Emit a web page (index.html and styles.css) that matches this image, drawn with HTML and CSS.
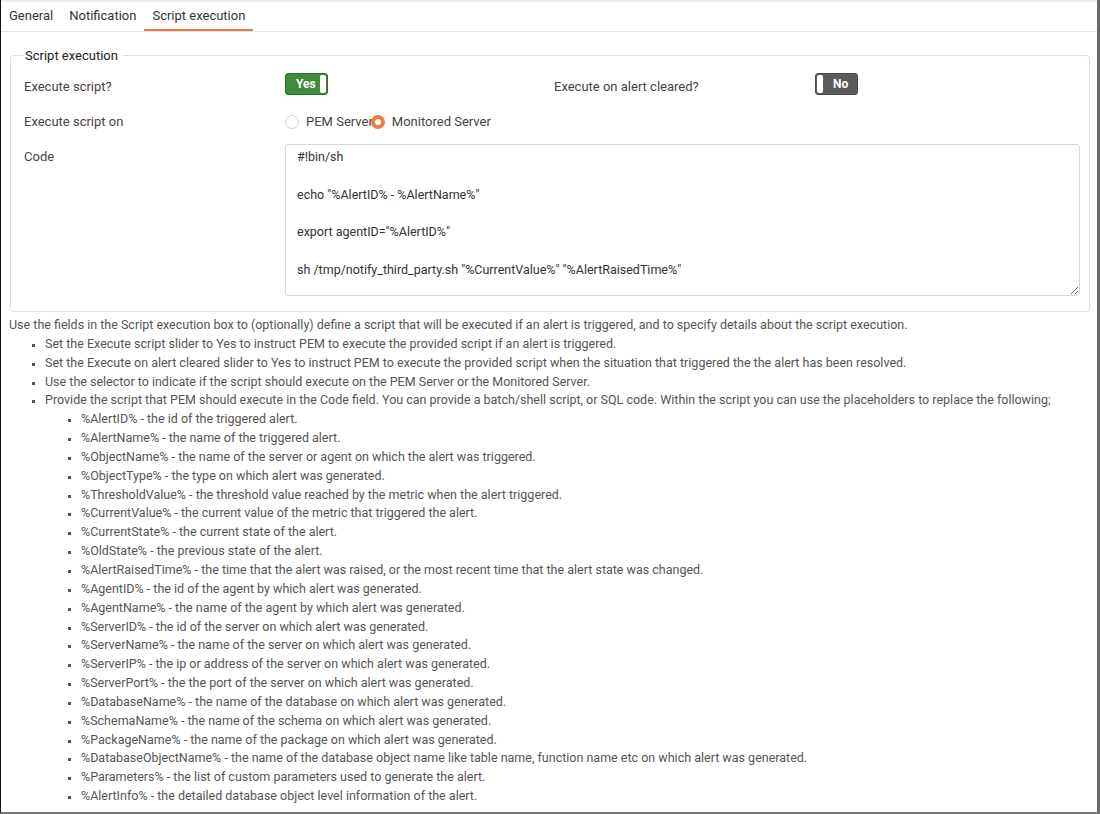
FILE: index.html
```html
<!DOCTYPE html>
<html>
<head>
<meta charset="utf-8">
<link rel="stylesheet" href="styles.css">
</head>
<body>
<div class="frame">
  <div class="topstrip"></div>
  <nav class="tabs">
    <span class="tab">General</span>
    <span class="tab">Notification</span>
    <span class="tab active">Script execution</span>
  </nav>
  <fieldset class="box">
    <legend>Script execution</legend>
    <div class="grid">
      <div class="label">Execute script?</div>
      <div class="ctrl"><span class="toggle on">Yes<i class="knob"></i></span></div>
      <div class="label">Execute on alert cleared?</div>
      <div class="ctrl"><span class="toggle off"><i class="knob"></i>No</span></div>

      <div class="label">Execute script on</div>
      <div class="ctrl span3">
        <span class="radio"></span><span class="rlabel pem">PEM Server</span><span class="radio checked"></span><span class="rlabel">Monitored Server</span>
      </div>

      <div class="label top">Code</div>
      <div class="ctrl span3 codewrap">
        <textarea class="code" readonly>#!bin/sh

echo "%AlertID% - %AlertName%"

export agentID="%AlertID%"

sh /tmp/notify_third_party.sh "%CurrentValue%" "%AlertRaisedTime%"</textarea>
      </div>
    </div>
  </fieldset>
  <div class="doc">
    <p>Use the fields in the Script execution box to (optionally) define a script that will be executed if an alert is triggered, and to specify details about the script execution.</p>
    <ul>
      <li>Set the Execute script slider to Yes to instruct PEM to execute the provided script if an alert is triggered.</li>
      <li>Set the Execute on alert cleared slider to Yes to instruct PEM to execute the provided script when the situation that triggered the the alert has been resolved.</li>
      <li>Use the selector to indicate if the script should execute on the PEM Server or the Monitored Server.</li>
      <li>Provide the script that PEM should execute in the Code field. You can provide a batch/shell script, or SQL code. Within the script you can use the placeholders to replace the following;
        <ul>
          <li>%AlertID% - the id of the triggered alert.</li>
          <li>%AlertName% - the name of the triggered alert.</li>
          <li>%ObjectName% - the name of the server or agent on which the alert was triggered.</li>
          <li>%ObjectType% - the type on which alert was generated.</li>
          <li>%ThresholdValue% - the threshold value reached by the metric when the alert triggered.</li>
          <li>%CurrentValue% - the current value of the metric that triggered the alert.</li>
          <li>%CurrentState% - the current state of the alert.</li>
          <li>%OldState% - the previous state of the alert.</li>
          <li>%AlertRaisedTime% - the time that the alert was raised, or the most recent time that the alert state was changed.</li>
          <li>%AgentID% - the id of the agent by which alert was generated.</li>
          <li>%AgentName% - the name of the agent by which alert was generated.</li>
          <li>%ServerID% - the id of the server on which alert was generated.</li>
          <li>%ServerName% - the name of the server on which alert was generated.</li>
          <li>%ServerIP% - the ip or address of the server on which alert was generated.</li>
          <li>%ServerPort% - the the port of the server on which alert was generated.</li>
          <li>%DatabaseName% - the name of the database on which alert was generated.</li>
          <li>%SchemaName% - the name of the schema on which alert was generated.</li>
          <li>%PackageName% - the name of the package on which alert was generated.</li>
          <li>%DatabaseObjectName% - the name of the database object name like table name, function name etc on which alert was generated.</li>
          <li>%Parameters% - the list of custom parameters used to generate the alert.</li>
          <li>%AlertInfo% - the detailed database object level information of the alert.</li>
        </ul>
      </li>
    </ul>
  </div>
</div>
</body>
</html>
```
FILE: styles.css
```css
html, body {
  margin: 0;
  padding: 0;
  background: #fff;
}
body {
  font-family: Roboto, "Noto Sans", sans-serif;
  font-size: 13px;
  color: #444;
}
.frame {
  box-sizing: border-box;
  width: 1100px;
  height: 814px;
  border-left: 1px solid #111;
  border-right: 3px solid #6a6a6a;
  border-bottom: 2px solid #777;
  overflow: hidden;
  background: #fff;
}
.topstrip {
  height: 2px;
  background: #ececec;
}
.tabs {
  display: flex;
  height: 29px;
  border-bottom: 1px solid #e4e4e4;
}
.tab {
  display: flex;
  align-items: center;
  padding: 0 8px;
  color: #333;
  height: 27px;
  border-bottom: 2px solid transparent;
}
.tab.active {
  border-bottom-color: #e8793a;
}
.box {
  margin: 16px 7px 0 9px;
  border: 1px solid #dedede;
  border-radius: 4px;
  padding: 0 9px 15px 13px;
  min-width: 0;
}
.box legend {
  padding: 0 5px 0 1px;
  color: #222;
  font-size: 13px;
}
.grid {
  display: grid;
  grid-template-columns: 261px 269px 261px 1fr;
  align-items: center;
  padding-top: 6px;
}
.label {
  color: #444;
  height: 35px;
  display: flex;
  align-items: center;
}
.label.top {
  align-self: start;
  height: 24px;
  margin-top: 5px;
}
.ctrl {
  display: flex;
  align-items: center;
  height: 35px;
}
.span3 {
  grid-column: span 3;
}
.codewrap {
  height: auto;
  margin-top: 5px;
}
.toggle {
  box-sizing: border-box;
  width: 43px;
  height: 22px;
  border-radius: 3px;
  display: flex;
  align-items: center;
  font-weight: bold;
  font-size: 12px;
  color: #fff;
  margin-top: -6px;
}
.toggle.on {
  background: #3f8a3c;
  border: 1px solid #2f6f2d;
  padding-left: 10px;
  justify-content: space-between;
}
.toggle.off {
  background: #5c5c5c;
  border: 1px solid #4a4a4a;
  gap: 9px;
}
.knob {
  display: block;
  width: 6px;
  height: 18px;
  background: #fff;
  border-radius: 2px;
  margin: 0 1px;
}
.radio {
  box-sizing: border-box;
  width: 14px;
  height: 14px;
  border-radius: 50%;
  border: 1px solid #d3d3d3;
  background: #fff;
  display: inline-block;
}
.radio.checked {
  border: 4px solid #e9803c;
}
.rlabel {
  margin: 0 0 0 7px;
  color: #444;
}
.rlabel.pem {
  margin-right: -2px;
}
.code {
  box-sizing: border-box;
  width: 795px;
  height: 152px;
  border: 1px solid #d9d9d9;
  border-radius: 3px;
  font-family: Roboto, "Noto Sans", sans-serif;
  font-size: 12.5px;
  line-height: 18.8px;
  color: #333;
  padding: 3px 11px;
  resize: vertical;
  outline: none;
  margin: 0;
  display: block;
}
.doc {
  padding: 4px 0 0 8px;
  color: #555;
  font-size: 12.5px;
  line-height: 18.85px;
}
.doc p {
  margin: 0;
}
.doc ul {
  margin: 0;
  padding-left: 36px;
  list-style: square;
}
.doc li::marker {
  font-size: 11px;
  color: #555;
}
```
